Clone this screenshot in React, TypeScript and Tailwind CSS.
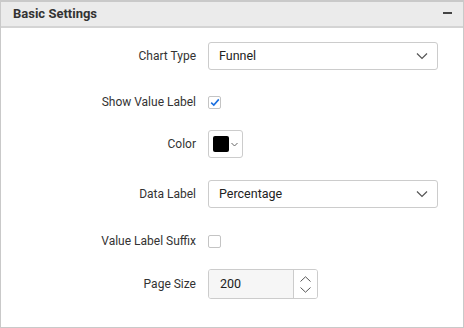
import React from "react";

function Chevron({ className = "" }: { className?: string }) {
  return (
    <svg className={className} width="12" height="8" viewBox="0 0 12 8" fill="none">
      <path d="M1 1.5 L6 6.5 L11 1.5" stroke="#555" strokeWidth="1.2" />
    </svg>
  );
}

function Row({ label, className = "", children }: { label: string; className?: string; children: React.ReactNode }) {
  return (
    <div className={`flex h-[28px] items-center gap-[11px] ${className}`}>
      <div className="w-[196px] shrink-0 pr-[1px] text-right text-[12px] leading-[14px] text-[#333]">{label}</div>
      {children}
    </div>
  );
}

function Select({ value }: { value: string }) {
  return (
    <div className="flex h-[28px] w-[230px] items-center justify-between rounded-[3px] border border-[#cccccc] bg-white pl-[10px] pr-[9px]">
      <span className="text-[12.5px] text-[#222]">{value}</span>
      <Chevron />
    </div>
  );
}

function Checkbox({ checked }: { checked?: boolean }) {
  return (
    <div className="flex h-[13px] w-[13px] items-center justify-center rounded-[2px] border border-[#c4c4c4] bg-white">
      {checked && (
        <svg width="10" height="9" viewBox="0 0 10 9" fill="none">
          <path d="M1.2 4.6 L3.8 7 L8.8 1.4" stroke="#1a6fe0" strokeWidth="1.6" />
        </svg>
      )}
    </div>
  );
}

export default function App() {
  return (
    <div className="h-[328px] w-[464px] bg-white font-['Roboto',sans-serif]">
      <div className="flex h-[328px] flex-col border border-t-2 border-[#c9c9c9]">
        <div className="flex h-[26px] shrink-0 items-center justify-between border-b-2 border-[#d4d4d4] bg-[#ebebeb] pl-[12px] pr-[11px]">
          <span className="text-[13px] font-bold text-[#333]">Basic Settings</span>
          <span className="mb-[2px] block h-[1.5px] w-[9px] bg-[#444]" />
        </div>

        <div className="flex flex-col pt-[14px]">
          <Row label="Chart Type">
            <Select value="Funnel" />
          </Row>

          <Row label="Show Value Label" className="mt-[18px]">
            <Checkbox checked />
          </Row>

          <Row label="Color" className="mt-[14px]">
            <div className="flex h-[28px] w-[35px] items-center rounded-[3px] border border-[#cccccc] bg-white pl-[4px]">
              <span className="block h-[16px] w-[16px] rounded-[2px] bg-black" />
              <svg className="ml-[2px]" width="7" height="5" viewBox="0 0 7 5" fill="none">
                <path d="M0.5 1 L3.5 4 L6.5 1" stroke="#666" strokeWidth="1" />
              </svg>
            </div>
          </Row>

          <Row label="Data Label" className="mt-[22px]">
            <Select value="Percentage" />
          </Row>

          <Row label="Value Label Suffix" className="mt-[19px]">
            <Checkbox />
          </Row>

          <Row label="Page Size" className="mt-[14px] h-[30px]">
            <div className="flex h-[30px] w-[110px] overflow-hidden rounded-[3px] border border-[#cccccc]">
              <div className="flex flex-1 items-center bg-[#f6f6f6] pl-[11px] text-[12.5px] text-[#222]">200</div>
              <div className="flex w-[24px] flex-col items-center justify-center gap-[5px] border-l border-[#cccccc] bg-white">
                <svg width="11" height="6" viewBox="0 0 11 6" fill="none">
                  <path d="M0.5 5.5 L5.5 0.8 L10.5 5.5" stroke="#555" strokeWidth="1" />
                </svg>
                <svg width="11" height="6" viewBox="0 0 11 6" fill="none">
                  <path d="M0.5 0.5 L5.5 5.2 L10.5 0.5" stroke="#555" strokeWidth="1" />
                </svg>
              </div>
            </div>
          </Row>
        </div>
      </div>
    </div>
  );
}
